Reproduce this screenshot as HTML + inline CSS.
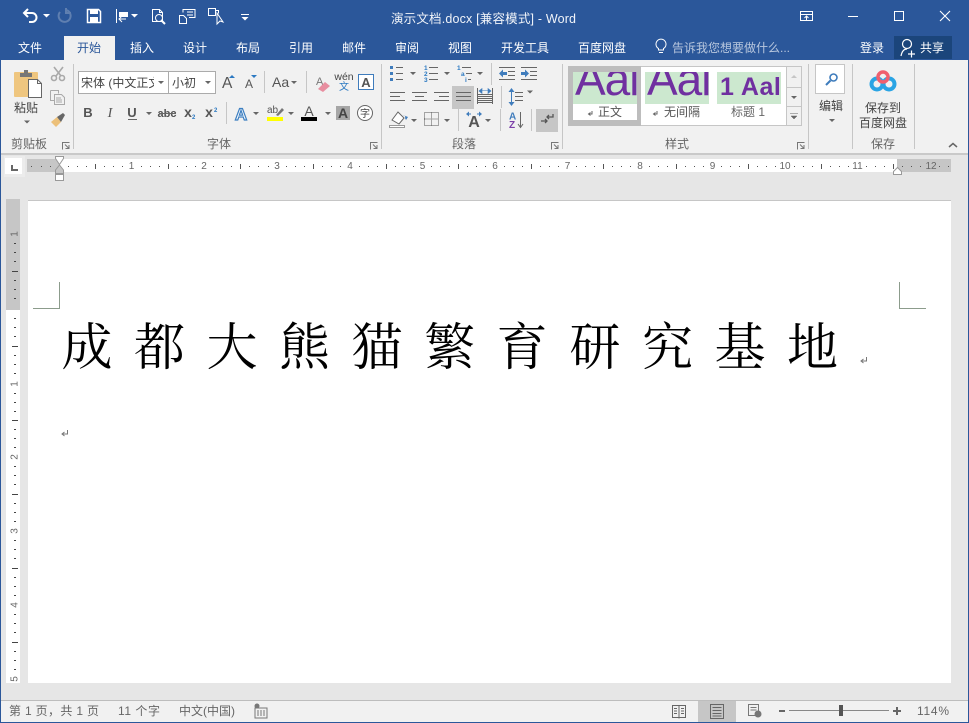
<!DOCTYPE html>
<html lang="zh"><head><meta charset="utf-8"><title>演示文档.docx - Word</title>
<style>
html,body{margin:0;padding:0;background:#e6e6e6;width:969px;height:723px;overflow:hidden}
svg{display:block}
text{font-family:"Liberation Sans","Noto Sans CJK SC",sans-serif;font-size:12px;fill:#444}
.w text,text.w{fill:#fff}
.l{fill:#666}
.c{text-anchor:middle}
.r{font-size:10px;fill:#666;text-anchor:middle}
.dd{fill:#666}
.sep{fill:#c6c6c6}
</style></head><body>
<svg width="969" height="723" viewBox="0 0 969 723" xmlns="http://www.w3.org/2000/svg">
<defs>
<clipPath id="c1"><rect x="573" y="72" width="64" height="32"/></clipPath>
<clipPath id="c2"><rect x="645" y="72" width="64" height="32"/></clipPath>
<clipPath id="c3"><rect x="717" y="72" width="64" height="32"/></clipPath>
<clipPath id="cf"><rect x="80" y="72" width="74" height="20"/></clipPath>
</defs>
<!-- backgrounds -->
<rect width="969" height="723" fill="#e6e6e6"/>
<rect width="969" height="60" fill="#2b579a"/>
<rect y="60" width="969" height="93" fill="#f1f1f1"/>
<rect y="153" width="969" height="2" fill="#c9c9c9"/>
<rect y="700" width="969" height="23" fill="#f1f1f1"/>
<rect y="700" width="969" height="1" fill="#bdbdbd"/>
<rect y="722" width="969" height="1" fill="#2b579a"/>
<rect x="0" width="1" height="723" fill="#2b579a"/>
<rect x="968" width="1" height="723" fill="#2b579a"/>

<!-- QAT -->
<g fill="none" stroke="#fff" stroke-width="2">
<path d="M25 13h7a4.500 4.500 0 0 1 0 9h-3"/><path d="M28 9l-4 4 4 4"/>
<path stroke="#5f7fb0" d="M60 12a6 6 0 1 0 6-2M66 8v5h5"/>
<path stroke-width="1.500" d="M87.500 9.500h11l2 2v11h-13z"/>
</g>
<rect x="90" y="9" width="8" height="5" fill="#fff"/><rect x="90" y="17" width="8" height="6" fill="#fff"/>
<path d="M43 14h7l-3.500 3.500zM131 14h7l-3.500 3.500z" fill="#fff"/>
<g fill="none" stroke="#fff" stroke-width="1">
<path d="M116.500 9v14"/><path d="M152.500 9.500h7l3 3v9h-10zM159.500 9.500v3h3"/><circle cx="159" cy="18" r="3.500"/><path d="M161.500 20.500l3.500 3.500" stroke-width="2"/>
<path d="M179.500 15.500h4l3 3v5h-7zM183 12.500v-3h12v8h-6"/><path d="M187 12h6M187 15h6"/>
<path d="M208.500 8.500h7v7h-7zM215.500 10.500h3v3"/><path d="M217 13v11l3-3 3 1z" fill="#2b579a"/>
</g>
<rect x="119" y="12" width="9" height="5" fill="#fff"/><path d="M119 19h7M122 16l-3 3 3 3" stroke="#fff" fill="none"/>
<path d="M241 14h8v1h-8zM241.500 17h7l-3.500 3.500z" fill="#fff"/>

<!-- title -->
<text class="w" x="391" y="23" textLength="185" style="fill:#f1f4f9;font-size:12.500px">演示文档.docx [兼容模式] - Word</text>

<!-- window controls -->
<g fill="none" stroke="#fff" stroke-width="1">
<path d="M800.500 11.500h12v9h-12zM800.500 14.500h12M806.500 20v-4M804.500 18l2-2 2 2"/>
<path d="M848 16.500h10"/>
<rect x="894.500" y="11.500" width="9" height="9"/>
<path d="M940 11l10 10M950 11l-10 10" stroke-width="1.100"/>
</g>

<!-- tabs -->
<rect x="64" y="36" width="51" height="24" fill="#f1f1f1"/>
<g class="w">
<text class="c" x="30" y="52">文件</text>
<text class="c" x="142" y="52">插入</text>
<text class="c" x="195" y="52">设计</text>
<text class="c" x="248" y="52">布局</text>
<text class="c" x="301" y="52">引用</text>
<text class="c" x="354" y="52">邮件</text>
<text class="c" x="407" y="52">审阅</text>
<text class="c" x="460" y="52">视图</text>
<text class="c" x="525" y="52">开发工具</text>
<text class="c" x="602" y="52">百度网盘</text>
<text class="c" x="872" y="52">登录</text>
</g>
<text class="c" x="89" y="52" style="fill:#2b579a">开始</text>
<path d="M658.500 50v-1.500a5 5 0 1 1 5 0v1.500zM659 52.500h4" fill="none" stroke="#fff"/>
<text x="672" y="52" style="fill:#b8c7de">告诉我您想要做什么...</text>
<rect x="894" y="36" width="58" height="23" fill="#1b457b"/>
<g fill="none" stroke="#fff" stroke-width="1.200"><circle cx="907" cy="44" r="4.500"/><path d="M901 56c1-5 3-7 6-7M908 54h7M911.500 50.500v7"/></g>
<text class="w" x="920" y="52">共享</text>

<!-- separators ribbon -->
<rect class="sep" x="73" y="64" width="1" height="85"/>
<rect class="sep" x="381" y="64" width="1" height="85"/>
<rect class="sep" x="562" y="64" width="1" height="85"/>
<rect class="sep" x="808" y="64" width="1" height="85"/>
<rect class="sep" x="852" y="64" width="1" height="85"/>
<rect class="sep" x="914" y="64" width="1" height="85"/>
<rect class="sep" x="264" y="71" width="1" height="22"/>
<rect class="sep" x="306" y="71" width="1" height="22"/>
<rect class="sep" x="226" y="102" width="1" height="22"/>
<rect class="sep" x="491" y="63" width="1" height="22"/>
<rect class="sep" x="501" y="86" width="1" height="22"/>
<rect class="sep" x="458" y="109" width="1" height="22"/>
<rect class="sep" x="500" y="109" width="1" height="22"/>
<rect class="sep" x="531" y="109" width="1" height="22"/>

<!-- clipboard -->
<rect x="14" y="72" width="24" height="25" rx="1" fill="#efc67f"/>
<path d="M20 73h4v-3h4v3h4v4H20z" fill="#777"/>
<path d="M28.500 79.500h9l4 4v14h-13z" fill="#fff" stroke="#666"/><path d="M37.500 79.500v4h4" fill="none" stroke="#666"/>
<text x="14" y="112">粘贴</text>
<path d="M24 120.500h6l-3 3z" class="dd"/>
<g fill="none" stroke="#a9a9a9" stroke-width="1.600"><path d="M54 67l7 9M63 67l-7 9"/><circle cx="54" cy="78" r="2.500"/><circle cx="62" cy="78" r="2.500"/>
<path d="M50.500 90.500h8v3M50.500 90.500v10h4" stroke-width="1"/><path d="M54.500 94.500h7l3 3v7h-10z" stroke-width="1"/><path d="M56 98h5M56 100h6M56 102h6" stroke-width="1"/></g>
<path d="M51 122l6-5 4 5-5 5z" fill="#ecc07a"/><path d="M57 117l6-4 2 2-4 7z" fill="#666"/>
<text class="l" x="11" y="148">剪贴板</text>
<g id="lch" fill="none" stroke="#777"><path d="M62.500 149.500v-7h7"/><path d="M65 144.500l4 4M69 145v3.500h-3.500"/></g>
<use href="#lch" x="308"/><use href="#lch" x="489"/><use href="#lch" x="735"/>

<!-- font -->
<rect x="78.500" y="71.500" width="90" height="22" fill="#fff" stroke="#ababab"/>
<rect x="168.500" y="71.500" width="47" height="22" fill="#fff" stroke="#ababab"/>
<text x="81" y="87" clip-path="url(#cf)">宋体 (中文正文)</text>
<path d="M158 81h6l-3 3z M205 81h6l-3 3z" class="dd"/>
<text x="172" y="87">小初</text>
<text x="222" y="88" style="font-size:15.500px;fill:#555">A</text><path d="M229 78l3-3 3 3z" fill="#2b79c2"/>
<text x="245" y="88" style="font-size:12px;fill:#555">A</text><path d="M251 75h6l-3 3z" fill="#2b79c2"/>
<text x="272" y="87" style="font-size:14px;fill:#555">Aa</text>
<path d="M291 81h6l-3 3z" class="dd"/>
<text x="316" y="85" style="font-size:11px;fill:#777">A</text><path d="M318 89l7-7 5 4-7 6z" fill="#e88ea0"/>
<text class="c" x="344" y="80" style="font-size:10.500px;fill:#444">wén</text>
<text class="c" x="344" y="90" style="font-size:10px;fill:#2b79c2">文</text>
<rect x="358.500" y="74.500" width="15" height="15" fill="#fff" stroke="#3f7cbc"/>
<text class="c" x="366" y="87" style="font-size:13px;font-weight:bold;fill:#555">A</text>
<text class="c" x="88" y="117" style="fill:#555;font-weight:bold;font-size:13px">B</text>
<text class="c" x="110" y="117" style="fill:#555;font-style:italic;font-family:'Liberation Serif',serif;font-size:14px">I</text>
<text class="c" x="132" y="117" style="fill:#555;font-weight:bold;font-size:13px">U</text>
<text class="c" x="167" y="117" style="fill:#555;font-size:11px;font-weight:bold">abc</text>
<text class="c" x="188" y="117" style="fill:#555;font-weight:bold;font-size:14px">x</text>
<text class="c" x="209" y="117" style="fill:#555;font-weight:bold;font-size:14px">x</text>
<path d="M128 119.500h9" stroke="#666"/><path d="M159 113.500h17" stroke="#666"/>
<text x="192" y="119" style="font-size:6px;fill:#2b79c2;font-weight:bold">2</text>
<text x="214" y="112" style="font-size:6px;fill:#2b79c2;font-weight:bold">2</text>
<text class="c" x="241" y="120" style="font-size:17px;fill:#fff;stroke:#3d7fc1;stroke-width:1.200;font-weight:bold">A</text>
<text x="267" y="113" style="font-size:10px;fill:#555">ab</text><path d="M276 115l6-7 2 2-6 6z" fill="#777"/>
<rect x="267" y="117" width="16" height="4" fill="#ffff00"/>
<text class="c" x="309" y="116" style="font-size:14px;fill:#555">A</text>
<rect x="301" y="117" width="16" height="4" fill="#000"/>
<rect x="336" y="106" width="14" height="14" fill="#a6a6a6"/>
<text class="c" x="343" y="118" style="font-size:14px;font-weight:bold;fill:#444">A</text>
<circle cx="365" cy="113" r="7.500" fill="#fff" stroke="#666"/>
<text class="c" x="365" y="117" style="font-size:10px">字</text>
<path d="M146 112h6l-3 3zM253 112h6l-3 3zM288 112h6l-3 3zM325 112h6l-3 3z" class="dd"/>
<text class="l c" x="219" y="148">字体</text>

<!-- paragraph -->
<rect x="452" y="86" width="22" height="23" fill="#c6c6c6"/>
<rect x="536" y="109" width="22" height="23" fill="#c6c6c6"/>
<g fill="#3f7cbc"><rect x="390" y="66" width="3" height="3"/><rect x="390" y="72" width="3" height="3"/><rect x="390" y="78" width="3" height="3"/></g>
<path d="M396 67.500h7M396 73.500h7M396 79.500h7M429 67.500h9M429 73.500h9M429 79.500h9M462 67.500h9M466 73.500h6M468 79.500h3" stroke="#666" fill="none"/>
<text x="424" y="70" style="font-size:6.500px;fill:#2b79c2;font-weight:bold">1</text>
<text x="424" y="76" style="font-size:6.500px;fill:#2b79c2;font-weight:bold">2</text>
<text x="424" y="82" style="font-size:6.500px;fill:#2b79c2;font-weight:bold">3</text>
<text x="457" y="70" style="font-size:6.500px;fill:#2b79c2;font-weight:bold">1</text>
<text x="461" y="76" style="font-size:6.500px;fill:#2b79c2;font-weight:bold">a</text>
<text x="465" y="82" style="font-size:6.500px;fill:#2b79c2;font-weight:bold">i</text>
<path d="M410 72h6l-3 3zM444 72h6l-3 3zM477 72h6l-3 3zM527 90.500h6l-3 3zM411 119h6l-3 3zM444 119h6l-3 3zM485 119h6l-3 3z" class="dd"/>
<path d="M499 67.500h16M508 71.500h7M508 75.500h7M499 79.500h16M521 67.500h16M530 71.500h7M530 75.500h7M521 79.500h16" stroke="#666" fill="none"/>
<path d="M499 73.500l4-4v2.500h4v3h-4v2.500zM529 73.500l-4-4v2.500h-4v3h4v2.500z" fill="#3f7cbc"/>
<path d="M390 92.500h15M390 96.500h10M390 100.500h15M412 92.500h15M415 96.500h9M412 100.500h15M434 92.500h15M439 96.500h10M434 100.500h15M456 92.500h15M456 96.500h15M456 100.500h15" stroke="#666" fill="none"/>
<path d="M478 94.500h14M478 96.500h14M478 98.500h14M478 100.500h14M478 102.500h14M477.500 88v16M492.500 88v16" stroke="#666" fill="none"/>
<path d="M479 91l3-2.500v5zM491 91l-3-2.500v5zM482 90.500h6" fill="#3f7cbc" stroke="#3f7cbc" stroke-width=".6"/>
<path d="M511.500 91v12" stroke="#3f7cbc"/><path d="M508.500 92l3-4 3 4zM508.500 102l3 4 3-4z" fill="#3f7cbc"/>
<path d="M515 92.500h8M515 96.500h8M515 100.500h8" stroke="#666"/>
<path d="M392 120l6-8 6 6-5 6z" fill="#fff" stroke="#666"/><path d="M403 115a2 2 0 0 1 2 3l1 2 2-3z" fill="#3f7cbc"/>
<rect x="389.500" y="125.500" width="15" height="2" fill="#fff" stroke="#999"/>
<path shape-rendering="crispEdges" d="M424.500 112.500h14v13h-14zM431.500 112.500v13M424.500 119h14" stroke="#555" stroke-dasharray="1 1" fill="none"/>
<text class="c" x="474" y="127" style="font-size:16px;font-weight:bold;fill:#555">A</text>
<path d="M466 114l3-2.500v5zM482 114l-3-2.500v5z" fill="#3f7cbc"/><path d="M468 114h3M480 114h-3" stroke="#3f7cbc"/>
<text x="509" y="119.500" style="font-size:10px;fill:#3f7cbc;font-weight:bold">A</text>
<text x="509" y="128" style="font-size:10px;fill:#7b3fa8;font-weight:bold">Z</text>
<path d="M520.500 112v15M518 124l2.500 3.500 2.500-3.500" stroke="#666" fill="none"/>
<path d="M553 114v3h-6M549 115l-2 2 2 2M541 121h6M545 119l2 2-2 2" stroke="#555" fill="none" stroke-width="1.300"/>
<text class="l c" x="464" y="148">段落</text>

<!-- styles -->
<rect x="568.500" y="66.500" width="219" height="59" fill="#fff" stroke="#c6c6c6"/>
<rect x="568" y="66" width="73" height="60" fill="#bdbdbd"/>
<rect x="573" y="72" width="64" height="48" fill="#fff"/>
<rect x="573" y="72" width="64" height="32" fill="#cce8cf"/>
<rect x="645" y="72" width="64" height="32" fill="#cce8cf"/>
<rect x="717" y="72" width="64" height="32" fill="#cce8cf"/>
<text x="575" y="95" clip-path="url(#c1)" style="font-size:46px;letter-spacing:-1px;fill:#7030a0">Aal</text>
<text x="647" y="95" clip-path="url(#c2)" style="font-size:46px;letter-spacing:-1px;fill:#7030a0">Aal</text>
<text x="720" y="95" clip-path="url(#c3)" style="font-size:25px;font-weight:bold;letter-spacing:.5px;fill:#7030a0">1 Aal</text>
<path d="M592 110v3h-3M590.500 111.500l-2 1.500 2 1.500M657 110v3h-3M655.500 111.500l-2 1.500 2 1.500" stroke="#666" fill="none" transform="translate(0 1)"/>
<text x="598" y="116" style="fill:#555">正文</text>
<text x="664" y="116" style="fill:#555">无间隔</text>
<text x="731" y="116" style="fill:#666">标题 1</text>
<rect x="787" y="67" width="14" height="59" fill="#f1f1f1"/>
<rect x="786.500" y="66.500" width="15" height="59" fill="none" stroke="#c6c6c6"/>
<path d="M787 87.500h14M787 106.500h14" stroke="#c6c6c6"/>
<path d="M791 78l3-3 3 3z" fill="#c6c6c6"/>
<path d="M791 96h6l-3 3z" fill="#666"/>
<path d="M790 113.500h8M791 116h6l-3 3z" stroke="#666" stroke-width=".5" fill="#666"/>
<text class="l c" x="677" y="148">样式</text>

<!-- edit -->
<rect x="815.500" y="64.500" width="29" height="29" fill="#fff" stroke="#c6c6c6"/>
<circle cx="833.500" cy="77.500" r="3.500" fill="none" stroke="#3f7cbc" stroke-width="1.600"/><path d="M830.500 80.500l-4.500 4.500" stroke="#3f7cbc" stroke-width="2"/>
<text class="c" x="831" y="110">编辑</text>
<path d="M829 119h6l-3 3z" class="dd"/>

<!-- baidu -->
<g fill="none" stroke-width="4">
<circle cx="877" cy="84" r="5.500" stroke="#2aa4e4"/>
<circle cx="889" cy="84" r="5.500" stroke="#2aa4e4"/>
<circle cx="883" cy="77" r="5" stroke="#f0606e" stroke-width="3.500"/>
</g>
<text class="c" x="883" y="112">保存到</text>
<text class="c" x="883" y="127">百度网盘</text>
<text class="l c" x="883" y="148">保存</text>
<path d="M949 147l4-3.500 4 3.500" fill="none" stroke="#666" stroke-width="1.500"/>

<!-- h ruler -->
<rect x="4" y="156" width="21" height="21" fill="#ececec"/>
<rect x="5" y="158" width="17" height="16" fill="#fff"/>
<path d="M12 165v5h6" fill="none" stroke="#666" stroke-width="2"/>
<rect x="27" y="159" width="924" height="13" fill="#fff"/>
<rect x="27" y="159" width="32" height="13" fill="#c6c6c6"/>
<rect x="897" y="159" width="54" height="13" fill="#c6c6c6"/>
<path shape-rendering="crispEdges" stroke="#555" fill="none" d="M31.500 166v1M41.500 166v1M50.500 166v1M68.500 166v1M77.500 166v1M86.500 166v1M104.500 166v1M113.500 166v1M122.500 166v1M141.500 166v1M150.500 166v1M159.500 166v1M177.500 166v1M186.500 166v1M195.500 166v1M213.500 166v1M222.500 166v1M231.500 166v1M249.500 166v1M258.500 166v1M268.500 166v1M286.500 166v1M295.500 166v1M304.500 166v1M322.500 166v1M331.500 166v1M340.500 166v1M359.500 166v1M368.500 166v1M377.500 166v1M395.500 166v1M404.500 166v1M413.500 166v1M431.500 166v1M440.500 166v1M449.500 166v1M467.500 166v1M476.500 166v1M485.500 166v1M504.500 166v1M513.500 166v1M522.500 166v1M540.500 166v1M549.500 166v1M558.500 166v1M576.500 166v1M585.500 166v1M594.500 166v1M612.500 166v1M621.500 166v1M630.500 166v1M649.500 166v1M658.500 166v1M667.500 166v1M685.500 166v1M694.500 166v1M703.500 166v1M721.500 166v1M730.500 166v1M739.500 166v1M757.500 166v1M766.500 166v1M775.500 166v1M794.500 166v1M803.500 166v1M812.500 166v1M830.500 166v1M839.500 166v1M848.500 166v1M866.500 166v1M875.500 166v1M884.500 166v1M902.500 166v1M911.500 166v1M920.500 166v1M939.500 166v1M948.500 166v1M95.500 164v5M168.500 164v5M240.500 164v5M313.500 164v5M386.500 164v5M458.500 164v5M531.500 164v5M603.500 164v5M676.500 164v5M748.500 164v5M821.500 164v5M893.500 164v5"/>
<g>
<text class="r" x="131.500" y="169">1</text><text class="r" x="204" y="169">2</text><text class="r" x="277" y="169">3</text><text class="r" x="350" y="169">4</text><text class="r" x="422.500" y="169">5</text><text class="r" x="495" y="169">6</text><text class="r" x="567.500" y="169">7</text><text class="r" x="640" y="169">8</text><text class="r" x="712.500" y="169">9</text><text class="r" x="785" y="169">10</text><text class="r" x="857.500" y="169">11</text><text class="r" x="931" y="169">12</text>
</g>
<!-- indent markers -->
<path d="M55.500 156.500h8v2l-4 6-4-6z" fill="#fff" stroke="#999"/>
<path d="M59.500 165l4 5v3.500h-8v-3.500z" fill="#c6c6c6" stroke="#999"/>
<rect x="55.500" y="174.500" width="8" height="6" fill="#fff" stroke="#999"/>
<path d="M897.500 167.500l4 4v3h-8v-3z" fill="#fff" stroke="#999"/>

<!-- v ruler -->
<rect x="6" y="199" width="14" height="484" fill="#fff"/>
<rect x="6" y="199" width="14" height="111" fill="#c6c6c6"/>
<path shape-rendering="crispEdges" stroke="#444" fill="none" d="M14 243.500h2M14 252.500h2M14 261.500h2M14 280.500h2M14 289.500h2M14 298.500h2M14 318.500h2M14 327.500h2M14 336.500h2M14 355.500h2M14 364.500h2M14 373.500h2M14 393.500h2M14 402.500h2M14 411.500h2M14 429.500h2M14 438.500h2M14 447.500h2M14 466.500h2M14 475.500h2M14 484.500h2M14 503.500h2M14 512.500h2M14 521.500h2M14 540.500h2M14 549.500h2M14 558.500h2M14 577.500h2M14 586.500h2M14 595.500h2M14 614.500h2M14 623.500h2M14 632.500h2M14 651.500h2M14 660.500h2M14 669.500h2M12 271.500h6M12 346.500h6M12 420.500h6M12 494.500h6M12 568.500h6M12 642.500h6"/>
<text class="r" transform="translate(17.500 234) rotate(-90)">1</text>
<text class="r" transform="translate(17.500 384) rotate(-90)">1</text>
<text class="r" transform="translate(17.500 457) rotate(-90)">2</text>
<text class="r" transform="translate(17.500 531) rotate(-90)">3</text>
<text class="r" transform="translate(17.500 605) rotate(-90)">4</text>
<text class="r" transform="translate(17.500 679) rotate(-90)">5</text>

<!-- page -->
<rect x="28" y="201" width="923" height="482" fill="#fff"/>
<rect x="28" y="200" width="923" height="1" fill="#c6c6c6"/>
<path d="M59.500 282v26.500H33M899.500 282v26.500H926" fill="none" stroke="#8c9c8c"/>
<text x="61.500 134 206.500 279 351.500 424.200 496.500 569.500 642 714.500 787" y="365" style="font-family:'Liberation Serif','Noto Serif CJK SC',serif;font-size:51px;fill:#000">成都大熊猫繁育研究基地</text>
<g fill="none" stroke="#777"><path d="M866.500 357v4h-5M863.500 359l-2.500 2 2.500 2"/><path d="M67.500 430v4h-5M64.500 432l-2.500 2 2.500 2"/></g>

<!-- status -->
<text class="l" x="9" y="715" textLength="90">第 1 页，共 1 页</text>
<text class="l" x="118" y="715" textLength="42">11 个字</text>
<text class="l" x="179" y="715">中文(中国)</text>
<path d="M255 708h12v10h-12z" fill="none" stroke="#777"/><circle cx="257" cy="706" r="2.500" fill="#777"/>
<path d="M257 711h9M257 713h9M257 715h9" stroke="#777" stroke-dasharray="2 1"/>
<rect x="698" y="701" width="38" height="21" fill="#c6c6c6"/>
<path d="M672.500 705.500h13v12h-13zM679 705.500v13M674 708.500h3M674 711h3M674 713.500h3M681 708.500h3M681 711h3M681 713.500h3" fill="none" stroke="#666"/>
<path d="M710.500 704.500h13v14h-13zM712.500 707.500h9M712.500 710.500h9M712.500 713.500h9M712.500 716h9" fill="none" stroke="#666"/>
<path d="M748.500 704.500h10v11h-10zM750.500 707.500h6M750.500 710h6" fill="none" stroke="#777"/><circle cx="758" cy="714" r="3.500" fill="#777"/>
<rect x="779" y="710" width="6" height="2" fill="#666"/>
<rect x="789" y="710" width="100" height="1" fill="#888"/>
<rect x="839" y="705" width="4" height="11" fill="#555"/>
<path d="M893 711h8M897 707v8" stroke="#666" stroke-width="2"/>
<text class="l" x="917" y="715" textLength="32">114%</text>
</svg>
</body></html>
